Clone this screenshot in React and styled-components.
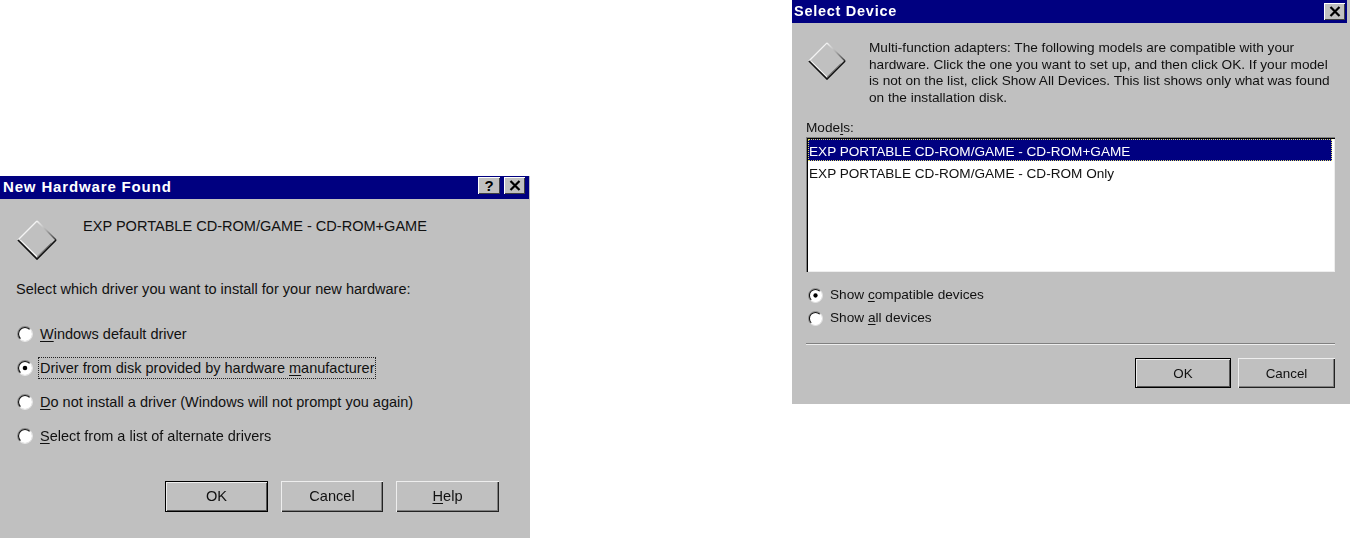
import React from "react";
import styled, { createGlobalStyle } from "styled-components";

const Global = createGlobalStyle`
  html, body { margin: 0; padding: 0; background: #fff; }
  body { font-family: "Liberation Sans", Arial, sans-serif; font-size: 14.55px; color: #111; }
`;

const Page = styled.div`
  width: 1350px;
  height: 538px;
  display: flex;
  justify-content: space-between;
  overflow: hidden;
  filter: blur(0.35px);
`;

const Dialog = styled.section`
  width: ${(p) => p.$width}px;
  height: ${(p) => p.$height}px;
  align-self: ${(p) => p.$align};
  background: #c0c0c0;
  display: flex;
  flex-direction: column;
`;

const TitleBar = styled.header`
  height: 23px;
  flex: none;
  margin-right: ${(p) => p.$inset}px;
  background: #000080;
  display: flex;
  align-items: flex-start;
  gap: 4px;
  padding: ${(p) => p.$top}px ${(p) => p.$right}px 0 ${(p) => p.$left}px;
  box-sizing: border-box;
`;

const TitleText = styled.h1`
  margin: ${(p) => p.$shift}px auto 0 0;
  color: #fff;
  font: bold ${(p) => p.$size}px/17px "Liberation Sans", Arial, sans-serif;
  letter-spacing: ${(p) => p.$spacing}px;
`;

const CaptionButton = styled.button`
  width: ${(p) => p.$width}px;
  height: 17px;
  padding: 0;
  border: 0;
  background: #c0c0c0;
  box-shadow: inset 1px 1px 0 #fff, inset -1px -1px 0 #404040;
  display: flex;
  align-items: center;
  justify-content: center;
  font: bold 15px/1 "Liberation Sans", Arial, sans-serif;
  color: #000;
`;

const LeftBody = styled.div`
  flex: 1;
  padding: 19px 30px 0 15px;
  display: flex;
  flex-direction: column;
`;

const HeaderRow = styled.div`
  display: flex;
  align-items: flex-start;
  gap: ${(p) => p.$gap}px;
  padding-left: ${(p) => p.$pad}px;
`;

const IconSlot = styled.div`
  flex: none;
  display: flex;
  margin-top: ${(p) => p.$top}px;
`;

const DeviceName = styled.p`
  margin: 0;
  line-height: 17px;
`;

const Prompt = styled.p`
  margin: 21px 0 0 1px;
  line-height: 17px;
`;

const RadioGroup = styled.div`
  display: flex;
  flex-direction: column;
  gap: ${(p) => p.$gap}px;
  margin-top: ${(p) => p.$top}px;
`;

const RadioRow = styled.label`
  display: flex;
  align-items: center;
  height: ${(p) => p.$height}px;
  padding-left: ${(p) => p.$indent}px;
  gap: ${(p) => p.$gap}px;
  font-size: ${(p) => p.$size}px;
`;

const RadioLabel = styled.span`
  padding: 1px 1px;
  outline: ${(p) => (p.$focus ? "1px dotted #222" : "none")};
  line-height: 18px;
  white-space: nowrap;
`;

const Key = styled.span`
  text-decoration: underline;
  text-underline-offset: 2px;
`;

const ButtonRow = styled.div`
  display: flex;
  justify-content: flex-end;
  gap: ${(p) => p.$gap}px;
  margin-top: ${(p) => p.$top}px;
  margin-right: ${(p) => p.$right}px;
`;

const PushButton = styled.button`
  width: ${(p) => p.$width}px;
  height: ${(p) => p.$height}px;
  padding: 0;
  border: 0;
  background: #c0c0c0;
  color: #111;
  font: ${(p) => p.$size}px/1 "Liberation Sans", Arial, sans-serif;
  box-shadow: ${(p) =>
    p.$primary
      ? "inset 0 0 0 1px #000, inset 2px 2px 0 #eee, inset -2px -2px 0 #555"
      : "inset 1px 1px 0 #eee, inset -1px -1px 0 #222, inset -2px -2px 0 #808080"};
`;

const RightBody = styled.div`
  flex: 1;
  padding: 16px 15px 0 14px;
  display: flex;
  flex-direction: column;
`;

const Intro = styled.p`
  margin: 1px 0 0;
  font-size: 13.65px;
  line-height: 16.6px;
  white-space: nowrap;
`;

const FieldLabel = styled.div`
  margin-top: 13px;
  height: 17px;
  line-height: 17px;
  font-size: 13.65px;
`;

const ListBox = styled.div`
  height: 135px;
  margin-top: 1px;
  box-sizing: border-box;
  background: #fff;
  padding: 2px 3px 0 2px;
  box-shadow: inset 1px 1px 0 #808080, inset 2px 2px 0 #000, inset -1px -1px 0 #eee;
`;

const ListItem = styled.div`
  height: 22px;
  padding: 2px 0 0 1px;
  line-height: 21px;
  font-size: 13.6px;
  white-space: nowrap;
  box-sizing: border-box;
  color: ${(p) => (p.$selected ? "#fff" : "#111")};
  background: ${(p) => (p.$selected ? "#000080" : "transparent")};
  outline: ${(p) => (p.$selected ? "1px dotted #dddd66" : "none")};
  outline-offset: -1px;
`;

const Separator = styled.hr`
  margin: 15px 0 0;
  height: 2px;
  border: 0;
  background: linear-gradient(#808080 50%, #eee 50%);
`;

const Diamond = ({ size, id }) => (
  <svg width={size} height={size} viewBox="0 0 42 42">
    <defs>
      <linearGradient id={id} x1="0" y1="0" x2="1" y2="1">
        <stop offset="0" stopColor="#f4f4f4" />
        <stop offset="0.5" stopColor="#aaa" />
        <stop offset="1" stopColor="#333" />
      </linearGradient>
    </defs>
    <path d="M1 21 21 1" stroke="#f4f4f4" strokeWidth="1.4" fill="none" />
    <path d="M21 1 41 21" stroke={`url(#${id})`} strokeWidth="1.6" fill="none" />
    <path d="M3.5 21 21 38.5" stroke="#fff" strokeWidth="1.1" fill="none" />
    <path d="M21 38.5 36 24" stroke="#777" strokeWidth="1" fill="none" />
    <path d="M1 21 21 41 41 21" stroke="#111" strokeWidth="1.7" fill="none" />
  </svg>
);

const Radio = ({ checked, size }) => (
  <svg width={size} height={size} viewBox="0 0 14 14" style={{ flex: "none" }}>
    <circle cx="7" cy="7" r="6.2" fill="#fff" />
    <path d="M2.4 11.6A6.5 6.5 0 0 1 11.6 2.4" stroke="#888" strokeWidth="0.9" fill="none" />
    <path d="M3 11A5.6 5.6 0 0 1 11 3" stroke="#111" strokeWidth="1" fill="none" />
    <path d="M11.6 2.4A6.5 6.5 0 0 1 2.4 11.6" stroke="#e8e8e8" strokeWidth="0.9" fill="none" />
    {checked && <circle cx="7" cy="7" r="2" fill="#000" />}
  </svg>
);

const CloseGlyph = () => (
  <svg width="12" height="11" viewBox="0 0 12 11">
    <path d="M1.5 1 10.5 10M10.5 1 1.5 10" stroke="#000" strokeWidth="2.2" />
  </svg>
);

const leftOptions = [
  [<><Key>W</Key>indows default driver</>, false, false],
  [<>Driver from disk provided by hardware <Key>m</Key>anufacturer</>, true, true],
  [<><Key>D</Key>o not install a driver (Windows will not prompt you again)</>, false, false],
  [<><Key>S</Key>elect from a list of alternate drivers</>, false, false],
];

export default function App() {
  return (
    <Page>
      <Global />
      <Dialog $width={530} $height={362} $align="flex-end">
        <TitleBar $inset={1} $top={1} $right={4} $left={3}>
          <TitleText $shift={1} $size={15} $spacing={0.85}>New Hardware Found</TitleText>
          <CaptionButton $width={22}>?</CaptionButton>
          <CaptionButton $width={21}><CloseGlyph /></CaptionButton>
        </TitleBar>
        <LeftBody>
          <HeaderRow $gap={26} $pad={2}>
            <IconSlot $top={2}><Diamond size={40} id="dg-left" /></IconSlot>
            <DeviceName>EXP PORTABLE CD-ROM/GAME - CD-ROM+GAME</DeviceName>
          </HeaderRow>
          <Prompt>Select which driver you want to install for your new hardware:</Prompt>
          <RadioGroup $gap={14} $top={26}>
            {leftOptions.map(([label, checked, focus], i) => (
              <RadioRow key={i} $height={20} $indent={2} $gap={6} $size={14.5}>
                <Radio checked={checked} size={16} />
                <RadioLabel $focus={focus}>{label}</RadioLabel>
              </RadioRow>
            ))}
          </RadioGroup>
          <ButtonRow $gap={13} $top={35} $right={1}>
            <PushButton $primary $width={103} $height={31} $size={14.6}>OK</PushButton>
            <PushButton $width={102} $height={31} $size={14.6}>Cancel</PushButton>
            <PushButton $width={103} $height={31} $size={14.6}><Key>H</Key>elp</PushButton>
          </ButtonRow>
        </LeftBody>
      </Dialog>

      <Dialog $width={558} $height={404} $align="flex-start">
        <TitleBar $inset={3} $top={3} $right={2} $left={2}>
          <TitleText $shift={0} $size={14.5} $spacing={0.73}>Select Device</TitleText>
          <CaptionButton $width={21}><CloseGlyph /></CaptionButton>
        </TitleBar>
        <RightBody>
          <HeaderRow $gap={23} $pad={2}>
            <IconSlot $top={3}><Diamond size={38} id="dg-right" /></IconSlot>
            <Intro>
              Multi-function adapters: The following models are compatible with your<br />
              hardware. Click the one you want to set up, and then click OK. If your model<br />
              is not on the list, click Show All Devices. This list shows only what was found<br />
              on the installation disk.
            </Intro>
          </HeaderRow>
          <FieldLabel>Mode<Key>l</Key>s:</FieldLabel>
          <ListBox>
            <ListItem $selected>EXP PORTABLE CD-ROM/GAME - CD-ROM+GAME</ListItem>
            <ListItem>EXP PORTABLE CD-ROM/GAME - CD-ROM Only</ListItem>
          </ListBox>
          <RadioGroup $gap={3} $top={13}>
            <RadioRow $height={20} $indent={2} $gap={6} $size={13.65}>
              <Radio checked size={15} />
              <RadioLabel>Show <Key>c</Key>ompatible devices</RadioLabel>
            </RadioRow>
            <RadioRow $height={20} $indent={2} $gap={6} $size={13.65}>
              <Radio size={15} />
              <RadioLabel>Show <Key>a</Key>ll devices</RadioLabel>
            </RadioRow>
          </RadioGroup>
          <Separator />
          <ButtonRow $gap={7} $top={13} $right={0}>
            <PushButton $primary $width={96} $height={30} $size={13.4}>OK</PushButton>
            <PushButton $width={97} $height={30} $size={13.4}>Cancel</PushButton>
          </ButtonRow>
        </RightBody>
      </Dialog>
    </Page>
  );
}
